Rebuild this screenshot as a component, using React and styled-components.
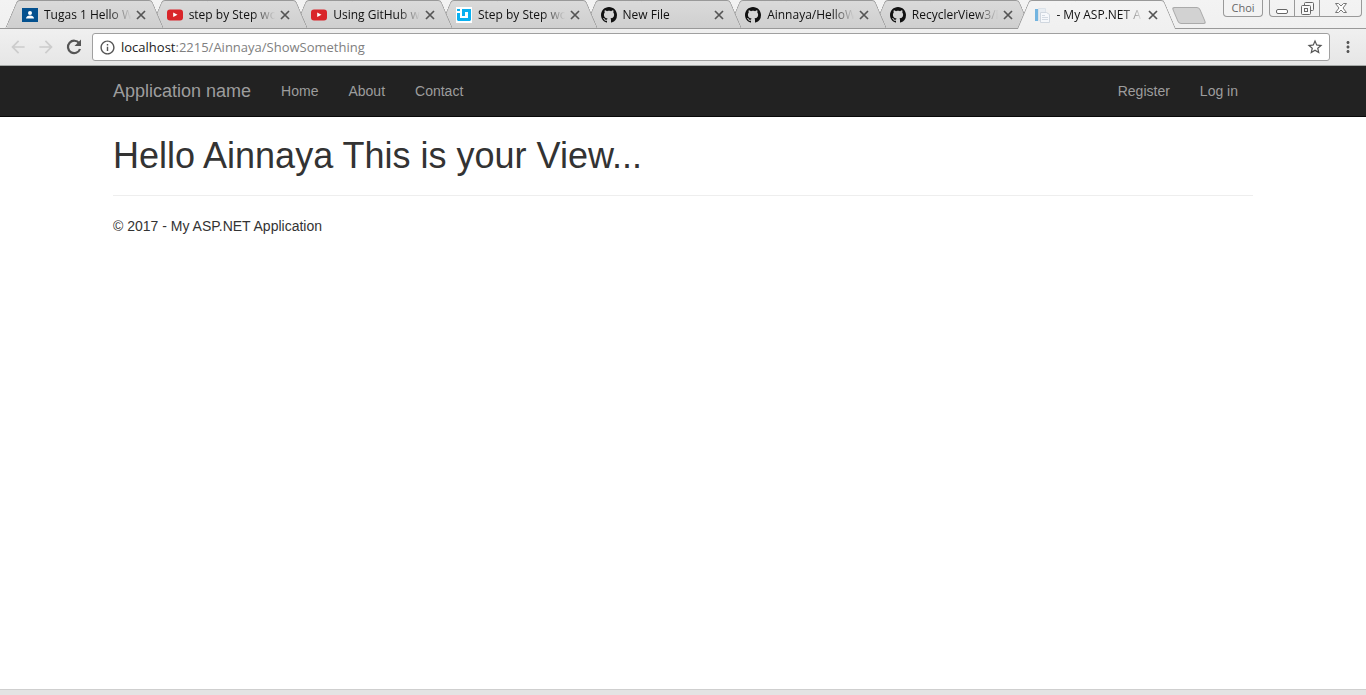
import React from "react";
import styled, { createGlobalStyle, css } from "styled-components";
import { MdArrowBack, MdArrowForward, MdInfoOutline, MdStarBorder, MdMoreVert } from "react-icons/md";

const Global = createGlobalStyle`
  *, *::before, *::after { box-sizing: border-box; }
  body { margin: 0; background: #fff; }
`;

const chromeFont = `"Open Sans", "Noto Sans", sans-serif`;

const Window = styled.div`
  display: flex;
  flex-direction: column;
  min-height: 100vh;
`;

const TitleBar = styled.header`
  display: flex;
  align-items: flex-start;
  height: 29px;
  padding: 0 4px 0 6px;
  background: linear-gradient(#f3f3f3, #f0f0f0);
  border-bottom: 1px solid #999;
  font-family: ${chromeFont};
`;

const TabStrip = styled.nav`
  display: flex;
  flex: 1;
  min-width: 0;
  height: 29px;
  isolation: isolate;
`;

const edge = css`
  content: "";
  position: absolute;
  z-index: -1;
  top: 0;
  bottom: 0;
  border: 0 solid #999;
  border-top-width: 1px;
  border-bottom-width: ${(p) => (p.$active ? 0 : 1)}px;
  background: ${(p) => (p.$active ? "linear-gradient(#f3f3f3, #f0f0f0)" : "linear-gradient(#dadada, #cfcfcf)")};
`;

const Tab = styled.div`
  position: relative;
  z-index: ${(p) => p.$order};
  isolation: isolate;
  display: flex;
  align-items: center;
  flex: 1 1 0;
  min-width: 0;
  height: 29px;
  padding: 0 15px 0 16px;
  & + & { margin-left: -12px; }
  &::before {
    ${edge}
    left: 5px;
    right: 50%;
    border-left-width: 1px;
    border-top-left-radius: 3px;
    transform: skewX(-23deg);
  }
  &::after {
    ${edge}
    left: 40%;
    right: 5px;
    border-right-width: 1px;
    border-top-right-radius: 3px;
    transform: skewX(23deg);
  }
`;

const Favicon = styled.span`
  display: flex;
  flex: none;
  width: 16px;
  height: 16px;
  margin-right: 6px;
`;

const TabLink = styled.a`
  flex: 1;
  min-width: 0;
  margin-right: 3px;
  white-space: nowrap;
  font-size: 12px;
  line-height: 20px;
  color: #111;
  text-decoration: none;
  mask-image: linear-gradient(to right, #000 calc(100% - 22px), transparent);
`;

const IconButton = styled.button`
  display: flex;
  flex: none;
  align-items: center;
  justify-content: center;
  width: ${(p) => p.$w || 28}px;
  height: ${(p) => p.$h || 28}px;
  padding: 0;
  border: 0;
  background: none;
  color: ${(p) => p.$tone || "#555"};
`;

const NewTab = styled.button`
  width: 28px;
  height: 17px;
  margin: 7px 20px 0 0;
  padding: 0;
  border: 1px solid #aaa;
  border-radius: 3px;
  background: #d2d2d2;
  transform: skewX(23deg);
`;

const Profile = styled.button`
  width: 40px;
  height: 17px;
  margin-right: 6px;
  padding: 0;
  border: 1px solid #999;
  border-top: 0;
  border-radius: 0 0 4px 4px;
  background: #f3f3f3;
  color: #666;
  font: 11px/16px ${chromeFont};
`;

const WindowControls = styled.div`
  display: flex;
  height: 17px;
  border: 1px solid #999;
  border-top: 0;
  border-radius: 0 0 4px 4px;
  overflow: hidden;
  button + button { border-left: 1px solid #999; }
`;

const Toolbar = styled.div`
  display: flex;
  align-items: center;
  height: 37px;
  padding: 0 4px;
  background: linear-gradient(#f0f0f0, #e6e6e6);
  border-bottom: 1px solid #a5a9a7;
`;

const Omnibox = styled.label`
  display: flex;
  align-items: center;
  flex: 1;
  min-width: 0;
  height: 28px;
  margin: 0 4px;
  padding: 0 0 0 6px;
  border: 1px solid #a0a0a0;
  border-radius: 3px;
  background: #fff;
  font: 13px/20px ${chromeFont};
  color: #222;
  svg { flex: none; }
`;

const Host = styled.span`
  margin-left: 5px;
`;

const Address = styled.input`
  flex: 1;
  min-width: 0;
  padding: 0;
  border: 0;
  outline: 0;
  background: none;
  font: inherit;
  color: #808080;
`;

const Page = styled.div`
  flex: 1;
  font: 14px/20px "Liberation Sans", Arial, sans-serif;
  color: #333;
`;

const Navbar = styled.nav`
  height: 51px;
  background: #222;
  border-bottom: 1px solid #080808;
`;

const Container = styled.div`
  max-width: 1170px;
  margin: 0 auto;
  padding: 0 15px;
`;

const NavRow = styled(Container)`
  display: flex;
`;

const NavLink = styled.a`
  padding: 15px;
  font-size: ${(p) => (p.$brand ? 18 : 14)}px;
  line-height: 20px;
  color: #9d9d9d;
  text-decoration: none;
  white-space: nowrap;
  ${(p) => p.$brand && "padding-left: 0;"}
`;

const Spacer = styled.div`
  flex: 1;
`;

const Title = styled.h1`
  margin: 19px 0;
  font-size: 36px;
  font-weight: 500;
  line-height: 40px;
`;

const Rule = styled.hr`
  margin: 0 0 20px;
  border: 0;
  border-top: 1px solid #eee;
`;

const Copyright = styled.p`
  margin: 0 0 10px;
`;

const StatusEdge = styled.footer`
  height: 6px;
  border-top: 1px solid #cfcfcf;
  background: #e3e3e3;
`;

const Svg = ({ s = 16, children }) => (
  <svg width={s} height={s} viewBox={`0 0 ${s} ${s}`} aria-hidden="true">{children}</svg>
);

const ClassroomIcon = () => (
  <Svg>
    <path d="M0 1h16v14H0z" fill="#04518f" />
    <circle cx="8" cy="6" r="2" fill="#fff" />
    <path d="M4 11.5c0-2 2-3 4-3s4 1 4 3z" fill="#fff" />
  </Svg>
);

const YouTubeIcon = () => (
  <Svg>
    <rect y="2.500" width="16" height="11" rx="3" fill="#d9252a" />
    <path d="M6.200 5.500v4.600L10.500 7.800z" fill="#fff" />
  </Svg>
);

const BlogIcon = () => (
  <Svg>
    <path d="M0 0h16v16H0z" fill="#fff" />
    <path d="M1 2h3v2H1zM6 2h9v11l-1 1H2l-1-1V6h3v5h8V5H9v4H6z" fill="#0ab0f0" />
  </Svg>
);

const DocIcon = () => (
  <Svg>
    <path d="M1 2h3v12H1z" fill="#72b4e0" />
    <path d="M4.500 1.500h7v12h-7z" fill="#e8edf2" stroke="#dbe2e8" />
    <path d="M6.500 5.500h6l3 2v8h-9z" fill="#f6f8fb" stroke="#d0d7df" />
    <path d="M8 8.500h3M8 10.500h6M8 12.500h6" stroke="#d3dae2" />
  </Svg>
);

const GitHubIcon = () => (
  <Svg>
    <path fill="#111" d="M8 0C3.58 0 0 3.58 0 8c0 3.54 2.29 6.53 5.47 7.59.4.07.55-.17.55-.38 0-.19-.01-.82-.01-1.49-2.01.37-2.53-.49-2.69-.94-.09-.23-.48-.94-.82-1.13-.28-.15-.68-.52-.01-.53.63-.01 1.08.58 1.23.82.72 1.21 1.87.87 2.33.66.07-.52.28-.87.51-1.07-1.78-.2-3.64-.89-3.64-3.95 0-.87.31-1.590.82-2.150-.08-.2-.36-1.020.08-2.120 0 0 .67-.21 2.200.82.64-.18 1.320-.27 2-.27s1.360.09 2 .27c1.530-1.040 2.200-.82 2.200-.82.44 1.100.16 1.920.08 2.120.51.56.82 1.270.82 2.150 0 3.070-1.870 3.750-3.650 3.950.29.25.54.73.54 1.480 0 1.070-.01 1.930-.01 2.200 0 .21.15.46.55.38A8.010 8.010 0 0 0 16 8c0-4.420-3.580-8-8-8z" />
  </Svg>
);

const CloseIcon = () => (
  <Svg s={14}>
    <path d="M3 3l8 8M11 3l-8 8" stroke="currentColor" strokeWidth="1.700" />
  </Svg>
);

const ReloadIcon = () => (
  <Svg s={18}>
    <path d="M14.200 5.300A6.200 6.200 0 1 0 15 11" fill="none" stroke="currentColor" strokeWidth="2.200" />
    <path d="M16 1.500V8H9.500z" fill="currentColor" />
  </Svg>
);

const tabs = [
  ["Tugas 1 Hello W", ClassroomIcon],
  ["step by Step wo", YouTubeIcon],
  ["Using GitHub wi", YouTubeIcon],
  ["Step by Step wo", BlogIcon],
  ["New File", GitHubIcon],
  ["Ainnaya/HelloW", GitHubIcon],
  ["RecyclerView3/F", GitHubIcon],
  ["- My ASP.NET A", DocIcon],
];

export default function App() {
  return (
    <Window>
      <Global />
      <TitleBar>
        <TabStrip>
          {tabs.map(([title, Icon], i) => {
            const active = i === tabs.length - 1;
            return (
              <Tab key={i} $active={active} $order={active ? 20 : 10 - i}>
                <Favicon><Icon /></Favicon>
                <TabLink href="#">{title}</TabLink>
                <IconButton $w={14} $h={14} aria-label="Close tab"><CloseIcon /></IconButton>
              </Tab>
            );
          })}
        </TabStrip>
        <NewTab aria-label="New tab" />
        <Profile>Choi</Profile>
        <WindowControls>
          <IconButton $w={24} $h={16} aria-label="Minimize">
            <svg width="12" height="14"><rect x=".5" y="8.500" width="11" height="4" rx="1.500" fill="#fff" stroke="#666" /></svg>
          </IconButton>
          <IconButton $w={25} $h={16} aria-label="Restore">
            <svg width="13" height="14" fill="#f8f8f8" stroke="#666"><rect x="3.500" y="1.500" width="9" height="8" rx="1" /><rect x=".5" y="4.500" width="9" height="9" rx="1" /><rect x="3.500" y="7.500" width="3" height="3" /></svg>
          </IconButton>
          <IconButton $w={42} $h={16} aria-label="Close">
            <svg width="12" height="10" viewBox="0 0 12 10"><path d="M.5.5h3L6 3l2.500-2.500h3L8 5l3.500 4.500h-3L6 7 3.500 9.500h-3L4 5z" fill="#fff" stroke="#777" /></svg>
          </IconButton>
        </WindowControls>
      </TitleBar>
      <Toolbar>
        <IconButton $tone="#ccc" aria-label="Back"><MdArrowBack size={20} /></IconButton>
        <IconButton $tone="#ccc" aria-label="Forward"><MdArrowForward size={20} /></IconButton>
        <IconButton aria-label="Reload"><ReloadIcon /></IconButton>
        <Omnibox>
          <MdInfoOutline size={17} color="#555" />
          <Host>localhost</Host>
          <Address aria-label="Address" defaultValue=":2215/Ainnaya/ShowSomething" />
          <IconButton aria-label="Bookmark"><MdStarBorder size={18} /></IconButton>
        </Omnibox>
        <IconButton aria-label="Menu"><MdMoreVert size={18} /></IconButton>
      </Toolbar>
      <Page>
        <Navbar>
          <NavRow>
            <NavLink href="#" $brand>Application name</NavLink>
            <NavLink href="#">Home</NavLink>
            <NavLink href="#">About</NavLink>
            <NavLink href="#">Contact</NavLink>
            <Spacer />
            <NavLink href="#">Register</NavLink>
            <NavLink href="#">Log in</NavLink>
          </NavRow>
        </Navbar>
        <Container as="main">
          <Title>Hello Ainnaya This is your View...</Title>
          <Rule />
          <Copyright>© 2017 - My ASP.NET Application</Copyright>
        </Container>
      </Page>
      <StatusEdge />
    </Window>
  );
}
